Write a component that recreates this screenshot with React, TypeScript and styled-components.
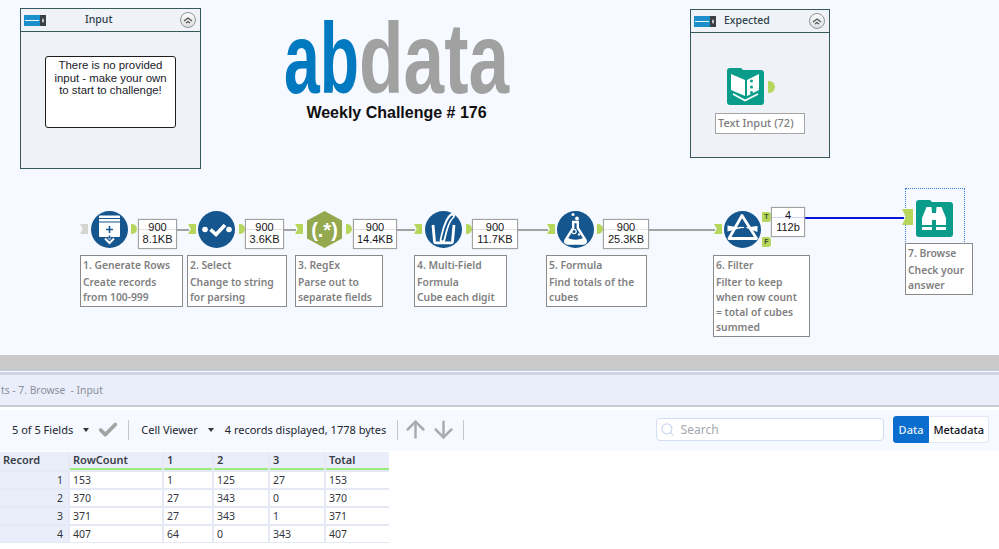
import React from 'react';
import styled, { createGlobalStyle } from 'styled-components';
import { ArrowDown, ArrowUp, Check, Search } from 'lucide-react';

const Global = createGlobalStyle`
  html, body { margin: 0; padding: 0; background: #fff; }
`;

const Root = styled.div`
  width: 999px;
  height: 549px;
  overflow: hidden;
  display: flex;
  flex-direction: column;
  font-family: 'Noto Sans', sans-serif;
  background: #fff;
`;

/* ---------- workflow canvas ---------- */

const Canvas = styled.div`
  position: relative;
  height: 355px;
  flex: none;
  background: #f6f9ff;
`;

type Box = { $x: number; $y: number; $w: number; $h: number };

const Container = styled.div<Box>`
  position: absolute;
  left: ${(p) => p.$x}px;
  top: ${(p) => p.$y}px;
  width: ${(p) => p.$w}px;
  height: ${(p) => p.$h}px;
  box-sizing: border-box;
  border: 1px solid #37585a;
  background: #eff2f6;
  display: flex;
  flex-direction: column;
`;

const ContainerHead = styled.div`
  height: 23px;
  flex: none;
  box-sizing: border-box;
  border-bottom: 1px solid #37585a;
  display: flex;
  align-items: center;
  padding: 0 4px 0 3px;
`;

const ContainerTitle = styled.span<{ $gap: number }>`
  margin: -2px 0 0 ${(p) => p.$gap}px;
  flex: 1;
  font-size: 10.5px;
  font-weight: 500;
  color: #2e3f4c;
`;

const RoundButton = styled.div`
  width: 16px;
  height: 16px;
  box-sizing: border-box;
  border: 1px solid #8f9396;
  border-radius: 50%;
  background: linear-gradient(#fbfbfb, #dcdfe2);
  display: flex;
  align-items: center;
  justify-content: center;
`;

const InputBody = styled.div`
  padding: 24px 24px 0 24px;
`;

const NoteBox = styled.div`
  width: 131px;
  height: 72px;
  box-sizing: border-box;
  border: 1px solid #1e1e1e;
  border-radius: 3px;
  background: #fff;
  font: 11.4px/12.5px 'Liberation Sans', sans-serif;
  color: #1a1a2a;
  text-align: center;
  padding: 2px 0 0;
`;

const ExpectedBody = styled.div`
  padding: 35px 0 0 24px;
`;

const ExpectedRow = styled.div`
  display: flex;
  align-items: center;
  gap: 4px;
  margin-left: 12px;
`;

const TextInputNote = styled.div`
  width: 90px;
  height: 21px;
  box-sizing: border-box;
  margin-top: 8px;
  border: 1px solid #a5a5a5;
  background: #fff;
  font-size: 11px;
  font-weight: 500;
  line-height: 18px;
  padding-left: 2px;
  color: #7d7d7d;
  white-space: nowrap;
`;

const LogoWrap = styled.div`
  position: absolute;
  left: 283px;
  top: 20px;
  width: 227px;
  display: flex;
  flex-direction: column;
  align-items: center;
`;

const ChallengeTitle = styled.div`
  margin-top: 8px;
  font: bold 16px/20px 'Liberation Sans', sans-serif;
  color: #101010;
  white-space: nowrap;
`;

const Wire = styled.div<{ $x: number; $y: number; $w: number; $blue?: boolean }>`
  position: absolute;
  left: ${(p) => p.$x}px;
  top: ${(p) => p.$y}px;
  width: ${(p) => p.$w}px;
  height: 2px;
  background: ${(p) => (p.$blue ? '#0a14d8' : '#a3a3a3')};
`;

const ToolSpot = styled.div<{ $x: number; $y: number }>`
  position: absolute;
  left: ${(p) => p.$x}px;
  top: ${(p) => p.$y}px;
  width: 37px;
  height: 37px;
  svg {
    display: block;
  }
`;

const InPort = styled.div<{ $x: number; $y: number; $h?: number; $w?: number; $idle?: boolean }>`
  position: absolute;
  left: ${(p) => p.$x}px;
  top: ${(p) => p.$y}px;
  width: ${(p) => p.$w ?? 8}px;
  height: ${(p) => p.$h ?? 10}px;
  background: ${(p) => (p.$idle ? '#d4d4d0' : '#b6d65c')};
  clip-path: polygon(0 0, 100% 0, 100% 100%, 0 100%, 35% 50%);
`;

const OutPort = styled.div<{ $x: number; $y: number; $w?: number }>`
  position: absolute;
  left: ${(p) => p.$x}px;
  top: ${(p) => p.$y}px;
  width: ${(p) => p.$w ?? 6}px;
  height: 10px;
  background: #b6d65c;
  border-radius: 0 ${(p) => (p.$w ? 3 : 5)}px ${(p) => (p.$w ? 3 : 5)}px 0;
  font: bold 7px/10px 'Liberation Sans', sans-serif;
  color: #38502a;
  text-align: center;
`;

const StaticPort = styled.div`
  width: 7px;
  height: 12px;
  background: #b6d65c;
  border-radius: 0 6px 6px 0;
`;

const Stat = styled.div<{ $x: number; $y: number; $w: number; $line: string }>`
  position: absolute;
  left: ${(p) => p.$x}px;
  top: ${(p) => p.$y}px;
  width: ${(p) => p.$w}px;
  height: 30px;
  box-sizing: border-box;
  border: 1px solid #a2a2a2;
  box-shadow: 0 0 1px #aaa;
  background: #fff;
  font: 11px/12.5px 'Liberation Sans', sans-serif;
  color: #161620;
  text-align: center;
  padding-top: 0.5px;
  &::before {
    content: '';
    position: absolute;
    left: 0;
    right: 0;
    top: 9px;
    height: 1px;
    background: ${(p) => p.$line};
  }
  span {
    position: relative;
    display: block;
  }
`;

const Annotation = styled.div<{ $x: number; $y: number; $w: number; $h: number }>`
  position: absolute;
  left: ${(p) => p.$x}px;
  top: ${(p) => p.$y}px;
  width: ${(p) => p.$w}px;
  height: ${(p) => p.$h}px;
  box-sizing: border-box;
  border: 1px solid #8a8a8a;
  background: #fff;
  padding: 2px 2px 0 2px;
  font-size: 10.3px;
  font-weight: 600;
  line-height: 15.2px;
  color: #7f7f7f;
  p {
    margin: 0;
    white-space: nowrap;
  }
  p:first-child {
    margin-bottom: 1.5px;
  }
`;

const SelectFrame = styled.div`
  position: absolute;
  left: 905px;
  top: 188px;
  width: 60px;
  height: 56px;
  box-sizing: border-box;
  border: 1px dotted #2f80d8;
  border-bottom: 0;
`;

/* ---------- results panel ---------- */

const Splitter = styled.div`
  height: 15px;
  flex: none;
  background: #c9c9c9;
  border-bottom: 1px solid #b8c8e6;
`;

const TabBand = styled.div`
  height: 30px;
  flex: none;
  margin-top: 1px;
  border-top: 3px solid #cdd3e3;
  border-bottom: 2px solid #c9ccd4;
  background: #e9eefa;
  display: flex;
  align-items: center;
  font-size: 10.3px;
  color: #8b8f9a;
  white-space: pre;
`;

const TabText = styled.span`
  margin-left: 1px;
`;

const Toolbar = styled.div`
  height: 41px;
  flex: none;
  margin-top: 3px;
  box-sizing: border-box;
  padding: 0 10px 2px 12px;
  background: #f6f9ff;
  display: flex;
  align-items: center;
  font-size: 11px;
  color: #23262e;
  white-space: nowrap;
`;

const Caret = styled.i`
  width: 0;
  height: 0;
  border: 3px solid transparent;
  border-top: 4px solid #333;
  border-bottom: 0;
  margin-left: 10px;
`;

const Divider = styled.div<{ $l: number; $r: number }>`
  width: 1px;
  height: 20px;
  background: #c4c7ce;
  margin: 0 ${(p) => p.$r}px 0 ${(p) => p.$l}px;
`;

const CheckMark = styled(Check)`
  margin-left: 8px;
`;

const ArrowNext = styled(ArrowDown)`
  margin-left: 1px;
`;

const RecordCount = styled.span`
  margin-left: 11px;
`;

const SearchBox = styled.div`
  width: 228px;
  height: 23px;
  margin-left: auto;
  box-sizing: border-box;
  border: 1px solid #d2dcf2;
  border-radius: 4px;
  background: #fff;
  display: flex;
  align-items: center;
  gap: 6px;
  padding-left: 3px;
  color: #a3a7ae;
  font-size: 12px;
`;

const Segments = styled.div`
  display: flex;
  margin-left: 9px;
  height: 27px;
`;

const Segment = styled.div<{ $on?: boolean }>`
  box-sizing: border-box;
  padding: 0 ${(p) => (p.$on ? 5 : 4)}px;
  display: flex;
  align-items: center;
  font-size: 11px;
  font-weight: 500;
  border-radius: ${(p) => (p.$on ? '3px 0 0 3px' : '0 3px 3px 0')};
  background: ${(p) => (p.$on ? '#0b6dcd' : '#fff')};
  color: ${(p) => (p.$on ? '#e8f2fc' : '#101018')};
  border: 1px solid ${(p) => (p.$on ? '#0b6dcd' : '#e2e8f5')};
  border-left-width: ${(p) => (p.$on ? 1 : 0)}px;
`;

const Table = styled.div`
  margin-top: 1px;
  width: 389px;
  display: grid;
  grid-template-columns: 68px 92px 48px 54px 54px 63px;
  grid-template-rows: 18px repeat(4, 16px);
  gap: 2px;
  font-size: 10.5px;
  line-height: 16px;
  color: #33363e;
  background: #e4e9f5;
  padding-bottom: 1px;
`;

const HeadCell = styled.div`
  background: #e9eefa;
  font-weight: 600;
  font-size: 11px;
  padding-left: 3px;
  line-height: 15px;
  box-sizing: border-box;
  color: #3a3d46;
  &:not(:first-child) {
    border-bottom: 2px solid #98ec7e;
  }
`;

const RowHead = styled.div`
  background: #e9eefa;
  text-align: right;
  padding-right: 5px;
`;

const Cell = styled.div`
  background: #fff;
  padding-left: 3px;
`;

/* ---------- drawings ---------- */

const BLUE = '#15568f';
const TEAL = '#0a9c8a';

const Disc: React.FC<React.PropsWithChildren> = ({ children }) => (
  <svg width="37" height="37" viewBox="0 0 37 37">
    <circle cx="18.5" cy="18.5" r="18.5" fill={BLUE} />
    {children}
  </svg>
);

const Folder: React.FC<React.PropsWithChildren> = ({ children }) => (
  <svg width="37" height="37" viewBox="0 0 37 37">
    <path
      d="M3 0h11l2 2h18a3 3 0 0 1 3 3v29a3 3 0 0 1-3 3H3a3 3 0 0 1-3-3V3a3 3 0 0 1 3-3z"
      fill={TEAL}
    />
    {children}
  </svg>
);

const GenerateRowsIcon = () => (
  <Disc>
    <path d="M8 5.5a1 1 0 0 1 1-1h19a1 1 0 0 1 1 1V25a1 1 0 0 1-1 1H9a1 1 0 0 1-1-1z" fill="#fff" />
    <path d="M8 7.5h21M8 11h21" stroke={BLUE} strokeWidth="1.2" />
    <path d="M18.5 15v7M15 18.5h7" stroke={BLUE} strokeWidth="1.6" />
    <path d="M18.5 23v5.5" stroke="#fff" strokeWidth="2" />
    <path d="M18.5 24.5v3" stroke={BLUE} strokeWidth="1.6" />
    <path d="M14 27.5l4.5 4.5 4.5-4.5" fill="none" stroke="#fff" strokeWidth="2" />
  </Disc>
);

const SelectIcon = () => (
  <Disc>
    <circle cx="7" cy="18.5" r="2.8" fill="#fff" />
    <circle cx="31" cy="18.5" r="2.8" fill="#fff" />
    <path d="M12.5 18.5l5.5 5L27 14" fill="none" stroke="#fff" strokeWidth="3.6" />
  </Disc>
);

const RegexIcon = () => (
  <svg width="37" height="37" viewBox="0 0 37 37">
    <path d="M18.5 0L36 9.5v18L18.5 37 1 27.5v-18z" fill="#94a94e" />
    <text
      x="18.5"
      y="25.5"
      textAnchor="middle"
      fontFamily="'Liberation Sans', sans-serif"
      fontWeight="bold"
      fontSize="20"
      fill="#fff"
    >
      (.*)
    </text>
  </svg>
);

const MultiFieldIcon = () => (
  <Disc>
    <path d="M8 14l1.5 16.5a1.5 1.5 0 0 0 1.5 1.3h15a1.5 1.5 0 0 0 1.5-1.3L29 14" fill="none" stroke="#fff" strokeWidth="2.8" />
    <path d="M27 5c-4 3-7 12-9.5 24" fill="none" stroke="#fff" strokeWidth="5.6" strokeLinecap="round" />
    <path d="M27 5.5c-4 3-7 12-9.5 23" fill="none" stroke={BLUE} strokeWidth="2" strokeLinecap="round" />
  </Disc>
);

const FormulaIcon = () => (
  <Disc>
    <circle cx="16" cy="3.5" r="1.5" fill="#fff" />
    <circle cx="20" cy="7.5" r="1.9" fill="#fff" />
    <path d="M15 11h7M16.2 11v6L8.5 29a2.4 2.4 0 0 0 2 3.6h16a2.4 2.4 0 0 0 2-3.6l-7.7-12v-6" fill="none" stroke="#fff" strokeWidth="2.4" />
    <path d="M9.5 26c5 3.5 13 3.5 18 0l1 4-1.500 2.5H10.5L9 30z" fill="#fff" />
    <circle cx="17" cy="20.5" r="2.2" fill="none" stroke="#fff" strokeWidth="1.2" />
    <circle cx="22" cy="23.5" r="1.2" fill="#fff" />
  </Disc>
);

const FilterIcon = () => (
  <Disc>
    <path d="M18 4.5L5 27.5h27.5z" fill="none" stroke="#fff" strokeWidth="2.8" strokeLinejoin="round" />
    <path d="M3.5 14.5l14 2.5-14 3.5z" fill="#fff" />
    <path d="M15 16.5h5" stroke="#fff" strokeWidth="1.2" />
    <path d="M21 16.5L33.5 15v6z" fill="#fff" />
  </Disc>
);

const TextInputIcon = () => (
  <Folder>
    <path d="M4 6l14 6v16L4 22z" fill="#fff" />
    <path d="M20 12l12-6v16l-12 6z" fill="#fff" />
    <circle cx="24.5" cy="13" r="1.5" fill={TEAL} />
    <circle cx="24.5" cy="19" r="1.5" fill={TEAL} />
    <circle cx="24.5" cy="24.5" r="1.5" fill={TEAL} />
    <path d="M6 26l12 6.500L31 26" fill="none" stroke="#fff" strokeWidth="1.8" />
  </Folder>
);

const BrowseIcon = () => (
  <Folder>
    <path d="M10.5 7h5l.5 6v12H6v-7z" fill="#fff" />
    <path d="M20.5 7h5l4.5 11v7H20V13z" fill="#fff" />
    <path d="M16 13h4v7h-4z" fill="#fff" />
    <path d="M6 27h10v3H6zM20 27h10v3H20z" fill="#fff" />
  </Folder>
);

const ContainerGlyph = () => (
  <svg width="22" height="11" viewBox="0 0 22 11">
    <rect width="16" height="11" fill="#1b8fca" />
    <rect x="1" y="5" width="14" height="1" fill="#e8f5fb" />
    <rect x="16" width="6" height="11" fill="#3a3f44" />
    <rect x="18" y="3.5" width="2" height="4" rx="1" fill="#c4c8cc" />
  </svg>
);

const Chevrons = () => (
  <svg width="10" height="8" viewBox="0 0 10 8">
    <path d="M1 5l4-3 4 3M3 7l2-1.5L7 7" fill="none" stroke="#555" strokeWidth="1.3" />
  </svg>
);

const AbDataLogo = () => (
  <svg width="227" height="75" viewBox="0 0 227 75">
    <text
      x="1"
      y="73"
      fontFamily="'Liberation Sans', sans-serif"
      fontWeight="bold"
      fontSize="100"
      textLength="75"
      lengthAdjust="spacingAndGlyphs"
      fill="#0079c1"
    >
      ab
    </text>
    <text
      x="76"
      y="73"
      fontFamily="'Liberation Sans', sans-serif"
      fontWeight="bold"
      fontSize="100"
      textLength="150"
      lengthAdjust="spacingAndGlyphs"
      fill="#a1a1a1"
    >
      data
    </text>
  </svg>
);

/* ---------- data ---------- */

const tools = [
  { x: 91, icon: <GenerateRowsIcon /> },
  { x: 198, icon: <SelectIcon /> },
  { x: 306, icon: <RegexIcon /> },
  { x: 425, icon: <MultiFieldIcon /> },
  { x: 557, icon: <FormulaIcon /> },
  { x: 724, icon: <FilterIcon /> },
];

const inPorts = [188, 295, 414, 547, 714];
const outPorts = [131, 239, 346, 466, 597];

const stats = [
  { x: 138, w: 39, a: '900', b: '8.1KB' },
  { x: 245, w: 39, a: '900', b: '3.6KB' },
  { x: 353, w: 44, a: '900', b: '14.4KB' },
  { x: 472, w: 46, a: '900', b: '11.7KB' },
  { x: 603, w: 46, a: '900', b: '25.3KB' },
];

const wires = [
  { x: 177, w: 12 },
  { x: 284, w: 12 },
  { x: 397, w: 18 },
  { x: 518, w: 30 },
  { x: 649, w: 66 },
];

const notes = [
  { x: 80, y: 255, w: 103, h: 52, lines: ['1. Generate Rows', 'Create records', 'from 100-999'] },
  { x: 187, y: 255, w: 100, h: 52, lines: ['2. Select', 'Change to string', 'for parsing'] },
  { x: 295, y: 255, w: 88, h: 52, lines: ['3. RegEx', 'Parse out to', 'separate fields'] },
  { x: 414, y: 255, w: 93, h: 52, lines: ['4. Multi-Field', 'Formula', 'Cube each digit'] },
  { x: 546, y: 255, w: 101, h: 52, lines: ['5. Formula', 'Find totals of the', 'cubes'] },
  { x: 713, y: 255, w: 97, h: 82, lines: ['6. Filter', 'Filter to keep', 'when row count', '= total of cubes', 'summed'] },
  { x: 905, y: 243, w: 68, h: 52, lines: ['7. Browse', 'Check your', 'answer'] },
];

const headers = ['Record', 'RowCount', '1', '2', '3', 'Total'];

const rows = [
  [1, 153, 1, 125, 27, 153],
  [2, 370, 27, 343, 0, 370],
  [3, 371, 27, 343, 1, 371],
  [4, 407, 64, 0, 343, 407],
];

export default function App() {
  return (
    <Root>
      <Global />
      <Canvas>
        <Container $x={20} $y={8} $w={181} $h={161}>
          <ContainerHead>
            <ContainerGlyph />
            <ContainerTitle $gap={39}>Input</ContainerTitle>
            <RoundButton>
              <Chevrons />
            </RoundButton>
          </ContainerHead>
          <InputBody>
            <NoteBox>
              There is no provided
              <br />
              input - make your own
              <br />
              to start to challenge!
            </NoteBox>
          </InputBody>
        </Container>

        <LogoWrap>
          <AbDataLogo />
          <ChallengeTitle>Weekly Challenge # 176</ChallengeTitle>
        </LogoWrap>

        <Container $x={690} $y={9} $w={140} $h={149}>
          <ContainerHead>
            <ContainerGlyph />
            <ContainerTitle $gap={8}>Expected</ContainerTitle>
            <RoundButton>
              <Chevrons />
            </RoundButton>
          </ContainerHead>
          <ExpectedBody>
            <ExpectedRow>
              <TextInputIcon />
              <StaticPort />
            </ExpectedRow>
            <TextInputNote>Text Input (72)</TextInputNote>
          </ExpectedBody>
        </Container>

        {wires.map((w) => (
          <Wire key={w.x} $x={w.x} $y={229} $w={w.w} />
        ))}
        <Wire $x={804} $y={217} $w={100} $blue />

        <InPort $x={80} $y={224} $idle />
        {inPorts.map((x) => (
          <InPort key={x} $x={x} $y={224} />
        ))}
        {outPorts.map((x) => (
          <OutPort key={x} $x={x} $y={224} />
        ))}
        {tools.map((t) => (
          <ToolSpot key={t.x} $x={t.x} $y={211}>
            {t.icon}
          </ToolSpot>
        ))}
        {stats.map((s) => (
          <Stat key={s.x} $x={s.x} $y={219} $w={s.w} $line="#e2e2e2">
            <span>{s.a}</span>
            <span>{s.b}</span>
          </Stat>
        ))}

        <OutPort $x={762} $y={212} $w={9}>T</OutPort>
        <OutPort $x={762} $y={237} $w={9}>F</OutPort>
        <Stat $x={771} $y={207} $w={34} $line="#d4d6f6">
          <span>4</span>
          <span>112b</span>
        </Stat>

        <SelectFrame />
        <InPort $x={902} $y={209} $w={11} $h={16} />
        <ToolSpot $x={916} $y={200}>
          <BrowseIcon />
        </ToolSpot>

        {notes.map((n) => (
          <Annotation key={n.x} $x={n.x} $y={n.y} $w={n.w} $h={n.h}>
            {n.lines.map((l) => (
              <p key={l}>{l}</p>
            ))}
          </Annotation>
        ))}
      </Canvas>

      <Splitter />
      <TabBand>
        <TabText>ts - 7. Browse  - Input</TabText>
      </TabBand>
      <Toolbar>
        5 of 5 Fields
        <Caret />
        <CheckMark size={22} color="#a3a3a3" strokeWidth={4} />
        <Divider $l={9} $r={12} />
        Cell Viewer
        <Caret />
        <RecordCount>4 records displayed, 1778 bytes</RecordCount>
        <Divider $l={11} $r={4} />
        <ArrowUp size={27} color="#a8abb2" strokeWidth={2.2} />
        <ArrowNext size={27} color="#a8abb2" strokeWidth={2.2} />
        <Divider $l={6} $r={0} />
        <SearchBox>
          <Search size={15} color="#cdd7ee" />
          Search
        </SearchBox>
        <Segments>
          <Segment $on>Data</Segment>
          <Segment>Metadata</Segment>
        </Segments>
      </Toolbar>
      <Table>
        {headers.map((h) => (
          <HeadCell key={h}>{h}</HeadCell>
        ))}
        {rows.map((r) =>
          r.map((v, i) =>
            i === 0 ? <RowHead key={`${r[0]}-head`}>{v}</RowHead> : <Cell key={`${r[0]}-${i}`}>{v}</Cell>,
          ),
        )}
      </Table>
    </Root>
  );
}
